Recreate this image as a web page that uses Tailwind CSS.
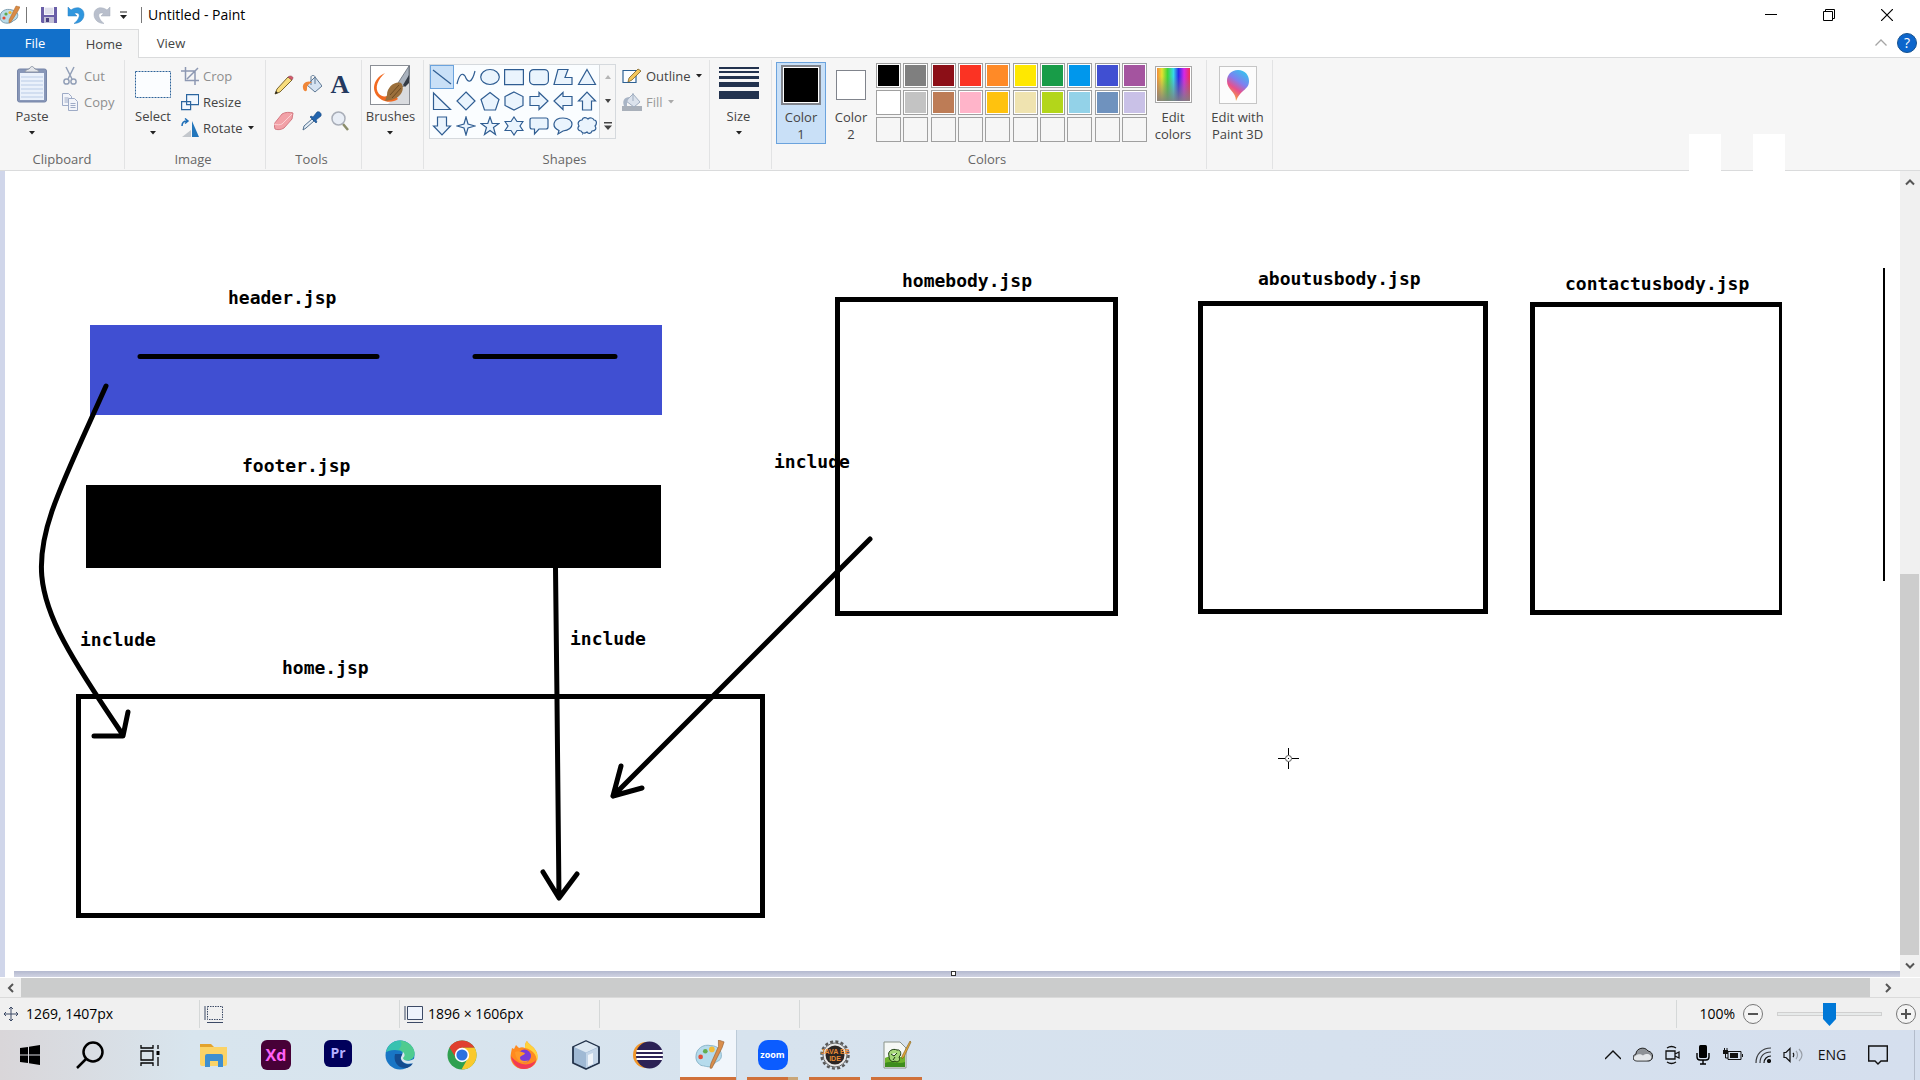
<!DOCTYPE html>
<html lang="en">
<head>
<meta charset="utf-8">
<title>Untitled - Paint</title>
<script src="https://cdn.jsdelivr.net/npm/@tailwindcss/browser@4"></script>
</head>
<body class="flex h-screen w-full flex-col overflow-hidden bg-white font-['Open_Sans',sans-serif] text-[13px] leading-5 text-[#444]">

<!-- Title bar -->
<header class="flex h-[29px] shrink-0 items-center">
  <svg class="h-5 w-5" viewBox="0 0 20 20"><path d="M0 12C0 6 6 3 12 5c5 1 7 4 5 8-1 2-3 2-4 3-2 3-13 4-13-4z" fill="#b9dbe8" stroke="#7d9eb0"/><circle cx="4" cy="13" r="1.600" fill="#e24b35"/><circle cx="6" cy="9" r="1.600" fill="#5fa84c"/><circle cx="10" cy="7.500" r="1.600" fill="#f1b52b"/><path d="M16 1l4 1-2 4-7 11-2 1 0-3z" fill="#d98a45" stroke="#a86426" stroke-width=".5"/></svg>
  <span class="ml-1.5 h-4 w-px bg-[#777]"></span>
  <button class="ml-3.5 h-4 w-4" aria-label="Save"><svg viewBox="0 0 16 16"><path d="M0 0h16v16H1l-1-1z" fill="#6a5fa8"/><path d="M3 0h10v8H3z" fill="#f4f4fa"/><path d="M4 2h8M4 4h8M4 6h8" stroke="#c9c9dd"/><path d="M3 10h10v6H3z" fill="#c2c0d6"/><path d="M5 11h3v4H5z" fill="#4a4180"/></svg></button>
  <button class="ml-2.5 h-[18px] w-[18px]" aria-label="Undo"><svg viewBox="0 0 18 18"><path d="M1 1v9h9L7.500 7.500C11 6 13 8 12 11c-1 3-3 5-5 6.500 6 0 10-4 10-9C17 2 10-.5 4 4z" fill="#2f96de" stroke="#2a7fc0" stroke-width=".5"/></svg></button>
  <button class="ml-2 h-[18px] w-[18px]" aria-label="Redo"><svg viewBox="0 0 18 18"><path d="M17 1v9H8l2.500-2.500C7 6 5 8 6 11c1 3 3 5 5 6.500-6 0-10-4-10-9C1 2 8-.5 14 4z" fill="#b9bfcc" stroke="#a5acba" stroke-width=".5"/></svg></button>
  <button class="ml-2 h-2.5 w-2.5" aria-label="Customize toolbar"><svg viewBox="0 0 10 10"><path d="M1 2h7" stroke="#222"/><path d="M1 5h7L4.500 9z" fill="#222"/></svg></button>
  <span class="ml-3 h-4 w-px bg-[#777]"></span>
  <h1 class="ml-1.5 text-[14px] text-black">Untitled - Paint</h1>
  <div class="mr-1 ml-auto flex">
    <button class="grid h-7 w-[58px] place-items-center" aria-label="Minimize"><svg class="h-3 w-3" viewBox="0 0 12 12"><path d="M0 5.500h12" stroke="#000"/></svg></button>
    <button class="grid h-7 w-[58px] place-items-center" aria-label="Restore"><svg class="h-3 w-3" viewBox="0 0 12 12" fill="none" stroke="#000"><path d="M.5 2.500h9v9h-9zM2.500 2.500v-2h9v9h-2"/></svg></button>
    <button class="grid h-7 w-[58px] place-items-center" aria-label="Close"><svg class="h-3 w-3" viewBox="0 0 12 12"><path d="M0 0l12 12M12 0L0 12" stroke="#000" stroke-width="1.200"/></svg></button>
  </div>
</header>

<!-- Ribbon tabs -->
<nav class="flex h-[29px] shrink-0 border-b border-[#dadbdc]">
  <button class="h-7 w-[70px] bg-[#1270ca] text-white">File</button>
  <button class="h-[29px] w-[69px] border-t border-r border-[#dadbdc] bg-[#f6f6f6]">Home</button>
  <button class="h-7 w-16">View</button>
  <div class="mr-[3px] ml-auto flex items-center gap-2.5">
    <button aria-label="Collapse ribbon"><svg class="h-2 w-3" viewBox="0 0 12 8"><path d="M.5 6.500L6 1l5.500 5.500" fill="none" stroke="#a5a5a5" stroke-width="1.300"/></svg></button>
    <button class="h-5 w-5 rounded-full border border-[#17528f] bg-[#0d66cc] text-center text-[14px] leading-4 text-white" aria-label="Help">?</button>
  </div>
</nav>

<!-- Ribbon -->
<section class="relative flex h-[113px] shrink-0 border-b border-[#dadbdc] bg-[#f6f6f6] pt-0.5 pb-px">
  <!-- Clipboard -->
  <div class="flex w-[125px] flex-col border-r border-[#e2e3e4]">
    <div class="flex flex-1 pt-1.5">
      <button class="ml-2 flex w-12 flex-col items-center">
        <svg class="h-10 w-8" viewBox="0 0 32 40"><rect x="1.500" y="3" width="29" height="33" rx="2" fill="#8897b8" stroke="#7685a8"/><path d="M4 7h24v27H4z" fill="#eaf1fb"/><path d="M5 11h22M5 15h22M5 19h22M5 23h22M5 27h22M5 31h22" stroke="#b9cbe6"/><path d="M9 6c0-3 4-2 5-4 1-2 3-2 4 0 1 2 5 1 5 4z" fill="#e4e6ea" stroke="#8d96a5"/></svg>
        <span>Paste</span>
        <svg class="mt-1 h-1.5 w-2" viewBox="0 0 8 6"><path d="M1 1h6L4 4.500z" fill="#222"/></svg>
      </button>
      <div class="ml-1.5 flex flex-col text-[#8e8e8e]">
        <button class="flex h-[26px] items-center gap-1.5 pb-1.5"><svg class="h-5 w-4" viewBox="0 0 16 20" fill="none" stroke="#93a0b8" stroke-width="1.500"><path d="M4 1l6 12M12 1L6 13"/><circle cx="4.500" cy="15.500" r="2.600"/><circle cx="11.500" cy="15.500" r="2.600"/></svg>Cut</button>
        <button class="flex h-[26px] items-center gap-1.5 pb-1.5"><svg class="h-5 w-4" viewBox="0 0 16 20" fill="#f3f5fa" stroke="#9eabc6"><path d="M.5 1.500h6l3 3v9h-9z"/><path d="M2.500 6h4M2.500 8h4M2.500 10h4"/><path d="M6.500 6.500h6l3 3v9h-9z"/><path d="M8.500 11.500h5M8.500 13.500h5M8.500 15.500h5"/></svg>Copy</button>
      </div>
    </div>
    <div class="h-5 text-center text-[#666]">Clipboard</div>
  </div>
  <!-- Image -->
  <div class="flex w-[141px] flex-col border-r border-[#e2e3e4]">
    <div class="flex flex-1 pt-1.5">
      <button class="ml-1 flex w-12 flex-col items-center">
        <svg class="h-10 w-9" viewBox="0 0 36 40"><rect x=".5" y="5.500" width="35" height="26" fill="#fbfdff" stroke="#2d6399" stroke-dasharray="2 1"/></svg>
        <span>Select</span>
        <svg class="mt-1 h-1.5 w-2" viewBox="0 0 8 6"><path d="M1 1h6L4 4.500z" fill="#222"/></svg>
      </button>
      <div class="ml-1 flex flex-col">
        <button class="flex h-[26px] items-center gap-1 pb-1.5 text-[#8e8e8e]"><svg class="h-[18px] w-[18px]" viewBox="0 0 18 18" fill="none" stroke="#8d98b2" stroke-width="1.500"><path d="M4.500 0v13.500H18M0 4h14v14M6 12l8-8M14 4l3-3"/></svg>Crop</button>
        <button class="flex h-[26px] items-center gap-1 pb-1.5"><svg class="h-[18px] w-[18px]" viewBox="0 0 18 18" fill="#f1f7fe" stroke="#2b659f" stroke-width="1.200"><path d="M.6 8.600h9v8h-9zM5.600 1.600h12v10h-12z"/></svg>Resize</button>
        <button class="flex h-[26px] items-center gap-1 pb-1.5"><svg class="h-5 w-[18px]" viewBox="0 0 18 20"><path d="M1 19h9v-7z" fill="#c3c7cc"/><path d="M11 3v16h7z" fill="#2376bb"/><path d="M1 8c0-4 2-5 5-5M4 .5L7 3 4 5.500" fill="none" stroke="#1f6fb8" stroke-width="1.500"/></svg>Rotate<svg class="h-1.5 w-2" viewBox="0 0 8 6"><path d="M1 1h6L4 4.500z" fill="#222"/></svg></button>
      </div>
    </div>
    <div class="h-5 pr-1 text-center text-[#666]">Image</div>
  </div>
  <!-- Tools -->
  <div class="flex w-24 flex-col border-r border-[#e2e3e4]">
    <div class="flex-1 pt-[15px] pl-2">
      <div class="grid w-[76px] grid-cols-3 justify-between gap-x-2 gap-y-4">
        <button aria-label="Pencil"><svg class="h-5 w-5" viewBox="0 0 20 20"><path d="M1 19l2-5L14 2l4 3L6 17z" fill="#f8dd7c" stroke="#7b6630"/><path d="M14 2l2-1c2 0 3 1 3 2l-1 2z" fill="#d9586b" stroke="#8d4450" stroke-width=".6"/><path d="M1 19l1-3 2 2z" fill="#222"/></svg></button>
        <button aria-label="Fill with color"><svg class="h-5 w-5" viewBox="0 0 20 20"><path d="M5 10l8-8 7 9-7 6z" fill="#d6e3f1" stroke="#5e7894"/><path d="M9 10V2c0-2 4-2 4 0v7" fill="none" stroke="#5e7894"/><path d="M10 7C4 5 0 9 1 13c0 3 4 5 4 1 0-4 1-4 5-7z" fill="#f08637"/></svg></button>
        <button class="h-5 w-5 font-['Liberation_Serif',serif] text-[26px] leading-5 font-bold text-[#24395f]" aria-label="Text">A</button>
        <button aria-label="Eraser"><svg class="h-5 w-5" viewBox="0 0 20 20"><path d="M0 13L8 3c3-2 8-2 11-1l-1 6-8 9c-3 2-7 2-9 1z" fill="#f2a1a7" stroke="#d47982"/><path d="M0 13c3 1 6 1 8 0L18 3" fill="none" stroke="#fbd0d3"/></svg></button>
        <button aria-label="Color picker"><svg class="h-5 w-5" viewBox="0 0 20 20"><path d="M1 19l1-4 8-7 2 2-8 7z" fill="#e4edf6" stroke="#52708e"/><path d="M8 6l1-1 2 1 4-5c2-1 5 1 4 4l-5 4 1 2-1 1z" fill="#2264ad" stroke="#16477e" stroke-width=".6"/></svg></button>
        <button aria-label="Magnifier"><svg class="h-5 w-5" viewBox="0 0 20 20"><path d="M13 13l5 6" stroke="#8a8c6a" stroke-width="2.500"/><circle cx="8.500" cy="7.500" r="6.500" fill="#e9eef6" stroke="#a9aeb8" stroke-width="1.500"/></svg></button>
      </div>
    </div>
    <div class="h-5 pr-1 text-center text-[#666]">Tools</div>
  </div>
  <!-- Brushes -->
  <div class="flex w-[62px] flex-col items-center border-r border-[#e2e3e4] pt-[5px] pr-1">
    <button class="flex flex-col items-center">
      <svg class="h-10 w-10" viewBox="0 0 40 40"><rect x=".5" y=".5" width="39" height="39" fill="#fff" stroke="#8b8f96"/><path d="M39 16v23H18z" fill="#d9dbdf"/><path d="M15 8C2 14 0 28 12 35c6 3 12 2 16-1l-6-7c-4 5-9 6-13 2-5-6-1-15 6-21z" fill="#f26a22"/><path d="M39 1L28 18l5 4 6-8z" fill="#a9b2be" stroke="#555d68" stroke-width=".7"/><path d="M39 10l-6 10 2 2 4-4z" fill="#333b46"/><path d="M17 30c0-8 8-14 14-12 3 3 2 9-1 12-5 5-9 5-15 6z" fill="#9b6f3b"/><path d="M20 30l9-10M22 33l9-10" stroke="#6d4a22"/></svg>
      <span class="mt-px">Brushes</span>
      <svg class="mt-1 h-1.5 w-2" viewBox="0 0 8 6"><path d="M1 1h6L4 4.500z" fill="#222"/></svg>
    </button>
  </div>
  <!-- Shapes -->
  <div class="flex w-[286px] flex-col border-r border-[#e2e3e4]">
    <div class="flex flex-1 pt-1 pl-[5px]">
      <div class="flex h-[75px] border border-[#d5d9dd] bg-[#fafdff]">
        <div class="grid w-[169px] grid-cols-7 grid-rows-3">
          <button class="grid place-items-center border border-[#6ba3dd] bg-[#c9e0f7]" aria-label="Line"><svg class="h-5 w-5" viewBox="0 0 20 20"><path d="M1 3l18 14" stroke="#2f5d92" stroke-width="1.200"/></svg></button>
          <button class="grid place-items-center" aria-label="Curve"><svg class="h-5 w-5" viewBox="0 0 20 20"><path d="M1 17C3 8 6 5 9 9c3 8 7 7 10-5" fill="none" stroke="#2f5d92" stroke-width="1.200"/></svg></button>
          <button class="grid place-items-center" aria-label="Oval"><svg class="h-5 w-5" viewBox="0 0 20 20" fill="#eaf4fd" stroke="#2f5d92" stroke-width="1.200"><ellipse cx="10" cy="10" rx="9.300" ry="7.500"/></svg></button>
          <button class="grid place-items-center" aria-label="Rectangle"><svg class="h-5 w-5" viewBox="0 0 20 20" fill="#eaf4fd" stroke="#2f5d92" stroke-width="1.200"><path d="M.6 2.600h18.800v15H.6z"/></svg></button>
          <button class="grid place-items-center" aria-label="Rounded rectangle"><svg class="h-5 w-5" viewBox="0 0 20 20" fill="#eaf4fd" stroke="#2f5d92" stroke-width="1.200"><rect x=".6" y="2.600" width="18.800" height="15" rx="4"/></svg></button>
          <button class="grid place-items-center" aria-label="Polygon"><svg class="h-5 w-5" viewBox="0 0 20 20" fill="#eaf4fd" stroke="#2f5d92" stroke-width="1.200"><path d="M5 2.500h10l-3 8h7v7H1z"/></svg></button>
          <button class="grid place-items-center" aria-label="Triangle"><svg class="h-5 w-5" viewBox="0 0 20 20" fill="#eaf4fd" stroke="#2f5d92" stroke-width="1.200"><path d="M10 2.500l8.500 15h-17z"/></svg></button>
          <button class="grid place-items-center" aria-label="Right triangle"><svg class="h-5 w-5" viewBox="0 0 20 20" fill="#eaf4fd" stroke="#2f5d92" stroke-width="1.200"><path d="M1.500 2v16.500h17z"/></svg></button>
          <button class="grid place-items-center" aria-label="Diamond"><svg class="h-5 w-5" viewBox="0 0 20 20" fill="#eaf4fd" stroke="#2f5d92" stroke-width="1.200"><path d="M10 1l9 9-9 9-9-9z"/></svg></button>
          <button class="grid place-items-center" aria-label="Pentagon"><svg class="h-5 w-5" viewBox="0 0 20 20" fill="#eaf4fd" stroke="#2f5d92" stroke-width="1.200"><path d="M10 1.500l9 7-3.500 10.500h-11L1 8.500z"/></svg></button>
          <button class="grid place-items-center" aria-label="Hexagon"><svg class="h-5 w-5" viewBox="0 0 20 20" fill="#eaf4fd" stroke="#2f5d92" stroke-width="1.200"><path d="M10 1l9 4.500v9L10 19l-9-4.500v-9z"/></svg></button>
          <button class="grid place-items-center" aria-label="Right arrow"><svg class="h-5 w-5" viewBox="0 0 20 20" fill="#eaf4fd" stroke="#2f5d92" stroke-width="1.200"><path d="M1 5.500h9V1.500l9 8.500-9 8.500v-4H1z"/></svg></button>
          <button class="grid place-items-center" aria-label="Left arrow"><svg class="h-5 w-5" viewBox="0 0 20 20" fill="#eaf4fd" stroke="#2f5d92" stroke-width="1.200"><path d="M19 5.500h-9V1.500L1 10l9 8.500v-4h9z"/></svg></button>
          <button class="grid place-items-center" aria-label="Up arrow"><svg class="h-5 w-5" viewBox="0 0 20 20" fill="#eaf4fd" stroke="#2f5d92" stroke-width="1.200"><path d="M5.500 19v-9H1.500L10 1l8.500 9h-4v9z"/></svg></button>
          <button class="grid place-items-center" aria-label="Down arrow"><svg class="h-5 w-5" viewBox="0 0 20 20" fill="#eaf4fd" stroke="#2f5d92" stroke-width="1.200"><path d="M5.500 1v9H1.500L10 19l8.500-9h-4V1z"/></svg></button>
          <button class="grid place-items-center" aria-label="Four-point star"><svg class="h-5 w-5" viewBox="0 0 20 20" fill="#eaf4fd" stroke="#2f5d92" stroke-width="1.200"><path d="M10 1l2 7 7 2-7 2-2 7-2-7-7-2 7-2z"/></svg></button>
          <button class="grid place-items-center" aria-label="Five-point star"><svg class="h-5 w-5" viewBox="0 0 20 20" fill="#eaf4fd" stroke="#2f5d92" stroke-width="1.200"><path d="M10 1l2.200 6.500H19l-5.500 4L15.500 18.500 10 14.500l-5.500 4 2-7L1 7.500h6.800z"/></svg></button>
          <button class="grid place-items-center" aria-label="Six-point star"><svg class="h-5 w-5" viewBox="0 0 20 20" fill="#eaf4fd" stroke="#2f5d92" stroke-width="1.200"><path d="M10 1l3 4.500h6L16 10l3 4.500h-6L10 19l-3-4.500H1L4 10 1 5.500h6z"/></svg></button>
          <button class="grid place-items-center" aria-label="Rounded rectangular callout"><svg class="h-5 w-5" viewBox="0 0 20 20" fill="#eaf4fd" stroke="#2f5d92" stroke-width="1.200"><path d="M3 2h14q2 0 2 2v7q0 2-2 2H10l-4.500 5V13H3q-2 0-2-2V4q0-2 2-2z"/></svg></button>
          <button class="grid place-items-center" aria-label="Oval callout"><svg class="h-5 w-5" viewBox="0 0 20 20" fill="#eaf4fd" stroke="#2f5d92" stroke-width="1.200"><path d="M5 18l1-3.500C-2 11 0 2 10 2c12 0 12 12 0 13z"/></svg></button>
          <button class="grid place-items-center" aria-label="Cloud callout"><svg class="h-5 w-5" viewBox="0 0 20 20" fill="#eaf4fd" stroke="#2f5d92" stroke-width="1.200"><path d="M4 15c-3 0-4-3-2-5-2-3 0-6 3-6 1-3 4-3 6-1 2-2 5-1 6 1 3 0 3 4 1 6 2 3 0 5-3 5-1 3-4 3-5 1-3 2-5 1-6-1zM5 18h1"/></svg></button>
        </div>
        <div class="flex w-4 flex-col border-l border-[#d5d9dd] bg-[#f6f6f6]">
          <button class="grid flex-1 place-items-center" aria-label="Scroll shapes up"><svg class="h-1.5 w-2" viewBox="0 0 8 6"><path d="M1 5h6L4 1z" fill="#b5b5b5"/></svg></button>
          <button class="grid flex-1 place-items-center" aria-label="Scroll shapes down"><svg class="h-1.5 w-2" viewBox="0 0 8 6"><path d="M1 1h6L4 5z" fill="#444"/></svg></button>
          <button class="grid flex-1 place-items-center" aria-label="More shapes"><svg class="h-2.5 w-2" viewBox="0 0 8 10"><path d="M0 1h8v1.500H0zM0 4.500h8L4 9z" fill="#444"/></svg></button>
        </div>
      </div>
      <div class="ml-1.5 flex flex-col pt-px">
        <button class="flex h-[26px] items-center gap-1 pb-1"><svg class="h-[18px] w-5" viewBox="0 0 20 18"><path d="M1 3.500h13v12H1z" fill="#fbfdff" stroke="#2d6193" stroke-width="1.200"/><path d="M6 15l1-4 9-9 3 2-9 9z" fill="#f4c75c" stroke="#7c5f24" stroke-width=".8"/></svg>Outline<svg class="h-1.5 w-2" viewBox="0 0 8 6"><path d="M1 1h6L4 4.500z" fill="#222"/></svg></button>
        <button class="flex h-[26px] items-center gap-1 pb-1 text-[#9a9a9a]"><svg class="h-5 w-5" viewBox="0 0 20 20"><path d="M0 14h20v5H0z" fill="#a9b0ba"/><path d="M4 9l7-7 7 8-6 5z" fill="#dbe2ec" stroke="#9fadc0"/><path d="M11 1v8" stroke="#9fadc0"/><path d="M8 5C2 5 0 9 2 14h3c0-4 0-5 3-9z" fill="#a8b4c5"/></svg>Fill<svg class="h-1.5 w-2" viewBox="0 0 8 6"><path d="M1 1h6L4 4.500z" fill="#aaa"/></svg></button>
      </div>
    </div>
    <div class="h-5 pr-1 text-center text-[#666]">Shapes</div>
  </div>
  <!-- Size -->
  <div class="flex w-[62px] flex-col items-center border-r border-[#e2e3e4] pt-1.5 pr-1">
    <button class="flex flex-col items-center">
      <svg class="h-10 w-10" viewBox="0 0 40 40" fill="#22324e"><path d="M0 1h40v2H0zM0 5h40v2H0zM0 10h40v3H0zM0 16h40v5H0zM0 25h40v8H0z"/></svg>
      <span>Size</span>
      <svg class="mt-1 h-1.5 w-2" viewBox="0 0 8 6"><path d="M1 1h6L4 4.500z" fill="#222"/></svg>
    </button>
  </div>
  <!-- Colors -->
  <div class="flex w-[435px] flex-col border-r border-[#e2e3e4]">
    <div class="flex flex-1 items-start pt-0.5 pl-1">
      <button class="flex h-[82px] w-[50px] flex-col items-center border border-[#6ba3dd] bg-[#c9e0f7] pt-0.5 leading-[17px]">
        <span class="h-10 w-10 shrink-0 border-2 border-[#80848c] bg-white p-px"><span class="block h-full w-full bg-black"></span></span>
        <span class="mt-1">Color<br>1</span>
      </button>
      <button class="flex h-[82px] w-[50px] flex-col items-center pt-2 leading-[17px]">
        <span class="h-[30px] w-[30px] shrink-0 border border-[#80848c] bg-white"></span>
        <span class="mt-[9px]">Color<br>2</span>
      </button>
      <div id="palette" class="mt-px grid w-[271px] grid-cols-[repeat(10,25px)] justify-between gap-y-0.5"></div>
      <button class="ml-1 flex w-11 flex-col items-center pt-1 leading-[17px]">
        <span class="h-[37px] w-[37px] border border-[#a9a9a9] bg-white p-px"><span class="block h-full w-full bg-[linear-gradient(to_top,rgba(128,128,128,0.9),rgba(128,128,128,0)_75%),linear-gradient(to_right,#f08a3c,#e8e030_15%,#3fd43a_32%,#38d8e8_50%,#2a2ae8_65%,#d628e8_82%,#f03050)]"></span></span>
        <span class="mt-1.5">Edit<br>colors</span>
      </button>
    </div>
    <div class="h-5 pr-1 text-center text-[#666]">Colors</div>
  </div>
  <!-- Paint 3D -->
  <div class="flex w-[66px] flex-col items-center border-r border-[#e2e3e4] pt-1.5 pr-1">
    <button class="flex flex-col items-center leading-[17px] whitespace-nowrap">
      <svg class="h-[38px] w-[38px]" viewBox="0 0 38 38"><defs><linearGradient id="p3d" x1=".8" y1="0" x2=".3" y2="1"><stop offset="0" stop-color="#2fc8ee"/><stop offset=".4" stop-color="#7f7ff0"/><stop offset=".65" stop-color="#e8508c"/><stop offset="1" stop-color="#f7b52e"/></linearGradient></defs><rect x=".5" y=".5" width="37" height="37" fill="#fcfcfc" stroke="#c6c6c6"/><path d="M19 4c7 0 11 5 11 11 0 9-8 8-13 20 0-10-9-11-9-20C8 9 12 4 19 4z" fill="url(#p3d)"/></svg>
      <span class="mt-[5px]">Edit with<br>Paint 3D</span>
    </button>
  </div>
  <span class="absolute right-[199px] -bottom-px h-[37px] w-8 bg-white"></span>
  <span class="absolute right-[135px] -bottom-px h-[37px] w-8 bg-white"></span>
</section>

<!-- Work area -->
<main class="flex min-h-0 flex-1">
  <div class="relative flex-1 overflow-hidden border-l-[5px] border-[#d0d6ea] bg-white">
    <svg class="absolute top-0 -left-[5px] h-[800px] w-[1900px]" viewBox="0 171 1900 800" fill="none" stroke="#000" stroke-width="5" stroke-linecap="round" stroke-linejoin="round">
      <rect x="90" y="325" width="572" height="90" fill="#404fd2" stroke="none"/>
      <path d="M140 356.500H377M475 356.500H615"/>
      <path d="M86 485h575v83H86z" fill="#000" stroke="none"/>
      <path d="M106 386C24 569 10 569 123 735M128 712l-5 24H94"/>
      <path d="M555.500 568L557 700l2 198M543 872l16 26 18-24"/>
      <path d="M870 539L613 796M621 766l-8 30 29-8"/>
      <g stroke-linejoin="miter">
        <path d="M78.500 696.500h684v219h-684zM837.500 299.500h278v314h-278zM1200.500 303.500h285v308h-285z"/>
        <path d="M1780.500 304.500h-248v308h248" stroke-linecap="butt"/>
        <path d="M1780.500 302v313" stroke-width="3" stroke-linecap="butt"/>
        <path d="M1884 268v313" stroke-width="2" stroke-linecap="butt"/>
      </g>
      <g stroke-width="1" stroke-linecap="butt">
        <path d="M1278 758.500h7M1292 758.500h7M1288.500 748v7M1288.500 762v7"/>
        <circle cx="1288.500" cy="758.500" r="3" stroke="#555"/>
        <path d="M1288 758.500h1"/>
      </g>
      <g class="font-['DejaVu_Sans_Mono',monospace] text-[18px] font-bold" fill="#000" stroke="none">
        <text x="228" y="304">header.jsp</text>
        <text x="242" y="472">footer.jsp</text>
        <text x="80" y="646">include</text>
        <text x="570" y="645">include</text>
        <text x="282" y="674">home.jsp</text>
        <text x="774" y="468">include</text>
        <text x="902" y="287">homebody.jsp</text>
        <text x="1258" y="285">aboutusbody.jsp</text>
        <text x="1565" y="290">contactusbody.jsp</text>
      </g>
    </svg>
    <div class="absolute right-0 bottom-0 left-[9px] h-1.5 bg-linear-to-b from-[#b4b9cf] to-[#d0d3e2]"></div>
    <span class="absolute bottom-px left-[calc(50%-2px)] h-[5px] w-[5px] border border-[#333] bg-white"></span>
  </div>
  <div class="flex w-5 flex-col bg-[#f0f0f0]">
    <button class="grid h-[22px] place-items-center" aria-label="Scroll up"><svg class="h-2 w-2.5" viewBox="0 0 10 8"><path d="M1 6.500l4-4 4 4" fill="none" stroke="#555" stroke-width="2"/></svg></button>
    <div class="flex-1"></div>
    <div class="mr-px flex-1 bg-[#cdcdcd]"></div>
    <button class="grid h-[22px] place-items-center" aria-label="Scroll down"><svg class="h-2 w-2.5" viewBox="0 0 10 8"><path d="M1 1.500l4 4 4-4" fill="none" stroke="#555" stroke-width="2"/></svg></button>
  </div>
</main>

<!-- Horizontal scroll bar -->
<div class="flex h-[21px] shrink-0 border-t border-b border-t-white border-b-[#dadada] bg-[#f0f0f0]">
  <button class="grid w-[21px] place-items-center" aria-label="Scroll left"><svg class="h-2.5 w-2" viewBox="0 0 8 10"><path d="M6 1L2 5l4 4" fill="none" stroke="#555" stroke-width="2"/></svg></button>
  <div class="flex-1 bg-[#cbcccc]"></div>
  <button class="mr-3.5 grid w-9 place-items-center" aria-label="Scroll right"><svg class="h-2.5 w-2" viewBox="0 0 8 10"><path d="M2 1l4 4-4 4" fill="none" stroke="#555" stroke-width="2"/></svg></button>
</div>

<!-- Status bar -->
<footer class="flex h-8 shrink-0 items-center bg-[#f0f0f0] text-[14px] text-black">
  <div class="flex h-7 w-[200px] items-center gap-[7px] border-r border-[#d5d8d8] pl-[3px]"><svg class="h-4 w-4" viewBox="0 0 16 16" fill="none" stroke="#3c4a66"><path d="M8 1v14M1 8h14M6 3l2-2 2 2M6 13l2 2 2-2M3 6L1 8l2 2M13 6l2 2-2 2"/></svg>1269, 1407px</div>
  <div class="flex h-7 w-[200px] items-center border-r border-[#d5d8d8] pl-1"><svg class="h-5 w-5" viewBox="0 0 20 20" fill="none" stroke="#3c4a66"><path d="M3.500 2.500h15v13h-15z" stroke-dasharray="1.500 1"/><path d="M1 2v14M3 18.500h16"/></svg></div>
  <div class="flex h-7 w-[200px] items-center gap-1 border-r border-[#d5d8d8] pl-1"><svg class="h-5 w-5" viewBox="0 0 20 20" fill="#eef3fc" stroke="#3c4a66"><path d="M3.500 2.500h15v13h-15z"/><path d="M1 2v14M3 18.500h16"/></svg>1896 × 1606px</div>
  <div class="h-7 w-[200px] border-r border-[#d5d8d8]"></div>
  <div class="h-7 flex-1 border-r border-[#d5d8d8]"></div>
  <label for="zoom" class="ml-[22px]">100%</label>
  <button class="ml-2 grid h-5 w-5 place-items-center rounded-full border border-[#777] bg-[#f4f4f4]" aria-label="Zoom out"><svg class="h-3 w-3" viewBox="0 0 12 12"><path d="M1 6h10" stroke="#555" stroke-width="2"/></svg></button>
  <input id="zoom" type="range" value="50" class="mx-3.5 h-6 w-[105px] appearance-none bg-transparent [&::-webkit-slider-runnable-track]:h-1 [&::-webkit-slider-runnable-track]:border [&::-webkit-slider-runnable-track]:border-[#d0d0d0] [&::-webkit-slider-runnable-track]:bg-[#e7eaea] [&::-webkit-slider-thumb]:-mt-[10px] [&::-webkit-slider-thumb]:h-[23px] [&::-webkit-slider-thumb]:w-[13px] [&::-webkit-slider-thumb]:appearance-none [&::-webkit-slider-thumb]:bg-[#0078d7] [&::-webkit-slider-thumb]:[clip-path:polygon(0_0,100%_0,100%_70%,50%_100%,0_70%)]">
  <button class="mr-1 grid h-5 w-5 place-items-center rounded-full border border-[#777] bg-[#f4f4f4]" aria-label="Zoom in"><svg class="h-3 w-3" viewBox="0 0 12 12"><path d="M1 6h10M6 1v10" stroke="#555" stroke-width="2"/></svg></button>
</footer>

<!-- Taskbar -->
<div class="flex h-[50px] shrink-0 bg-linear-to-r from-[#d9d6d9] via-[#d8e5ee] via-10% to-[#d5dfee]">
  <button class="grid w-[60px] place-items-center" aria-label="Start"><svg class="h-5 w-5" viewBox="0 0 20 20"><path d="M0 3l8-1v7.500H0zM9 1.800L20 0v9.500H9zM0 10.500h8V18l-8-1zM9 10.500h11V20L9 18.200z" fill="#000"/></svg></button>
  <button class="grid w-[60px] place-items-center" aria-label="Search"><svg class="h-7 w-7" viewBox="0 0 28 28" fill="none" stroke="#000" stroke-width="2.500"><circle cx="17" cy="11" r="9.500"/><path d="M10 18l-9 9"/></svg></button>
  <button class="mr-[3px] grid w-[60px] place-items-center" aria-label="Task view"><svg class="h-6 w-5" viewBox="0 0 20 24" fill="none" stroke="#000" stroke-width="1.300"><path d="M1 2v3h12V2M1 8h12v9H1zM1 23v-3h12v3M18 2v4M18 14v9"/><path d="M18 8v4" stroke-width="3"/></svg></button>
  <button class="grid w-[62px] place-items-center" aria-label="File Explorer"><svg class="h-7 w-7" viewBox="0 0 28 28"><path d="M0 3h11l3 3v3H0z" fill="#e3a32d"/><path d="M0 6h27v17q0 2-2 2H2q-2 0-2-2z" fill="#fbd366"/><path d="M5 15q0-2 2-2h14q2 0 2 2v11h-5v-6h-8v6H5z" fill="#3e8fd0"/></svg></button>
  <button class="grid w-[62px] place-items-center" aria-label="Adobe XD"><span class="grid h-[30px] w-[30px] place-items-center rounded-md bg-[#470137] text-[16px] font-bold text-[#ff61f6]">Xd</span></button>
  <button class="grid w-[62px] place-items-center" aria-label="Premiere Pro"><span class="mb-1 grid h-[27px] w-[28px] place-items-center rounded-md bg-[#00005b] text-[14px] font-bold text-[#b5b0ff]">Pr</span></button>
  <button class="grid w-[62px] place-items-center" aria-label="Edge"><svg class="h-[30px] w-[30px]" viewBox="0 0 30 30"><circle cx="15" cy="15" r="14.500" fill="#1976c5"/><path d="M1 12C3 4 9 0 16 .5c8 .5 13 7 13.500 12 .4 5-3 8-8 8-3 0-5-1-4-3 2-2 1-6-3-7C8 9 3 11 1 12z" fill="#37c2b0"/><path d="M15 .5c8 .5 14 6 14.500 12 .4 5-3 8-8 8-3 0-5-1-4-3 2-3 1-7-4-8 3-3 4-6 1.500-9z" fill="#5fd07a" opacity=".6"/><path d="M10 14c-2 8 3 15 12 14 3-1 5-3 6-5-5 3-10 1-11-3-1-1-1-2 0-3l1-3z" fill="#134c90"/><path d="M18 12c3 3 1 5 0 6 0 3 8 4 12 0v4l-2 1c-5 2-11 0-12-4-.5-2 1-3 2-7z" fill="#d8e5ee"/></svg></button>
  <button class="grid w-[62px] place-items-center" aria-label="Chrome"><svg class="h-[30px] w-[30px]" viewBox="0 0 30 30"><circle cx="15" cy="15" r="14.500" fill="#2fa04f"/><path d="M2.500 7.500A14.500 14.500 0 0 1 27.600 7.800H15L9 18z" fill="#e0402f"/><path d="M15 7.800h12.600A14.500 14.500 0 0 1 14.500 29.500L21 18z" fill="#fac92c"/><circle cx="15" cy="15" r="7.200" fill="#fff"/><circle cx="15" cy="15" r="5.600" fill="#2a72e0"/></svg></button>
  <button class="grid w-[62px] place-items-center" aria-label="Firefox"><svg class="h-[30px] w-[30px]" viewBox="0 0 30 30"><path d="M3 8l2 1 2-4 3 3c2-1 4-1 6 0 0-3 0-5 2-7 1 3 8 6 10 12 2 9-4 16-13 16C5 29 0 21 2 13z" fill="#ff8a1f"/><path d="M18 1c1 3 8 6 10 12 1 3 1 6 0 8-1-7-4-11-12-13 0-3 0-5 2-7z" fill="#ffd23c"/><path d="M2 16c1 7 6 13 13 13 6 0 11-4 12-9-4 5-16 8-25-4z" fill="#f23a55"/><circle cx="15.500" cy="16" r="6.500" fill="#7a3bd8"/><path d="M6 12c4-2 7 0 10 1-1 3-5 2-5 5 0 3 5 4 9 2-4 5-13 3-14-8z" fill="#ff9a2a"/></svg></button>
  <button class="grid w-[62px] place-items-center" aria-label="NetBeans"><svg class="h-[30px] w-7" viewBox="0 0 28 30" stroke="#22324a" stroke-width="1.800" stroke-linejoin="round"><path d="M14 1l13 6v16l-13 6L1 23V7z" fill="#9fb9d4"/><path d="M14 1.500l12 5.500-12 5.500L2 7z" fill="#dbe7f2" stroke="none"/><path d="M14 13l12-5.500v15L14 28z" fill="#c3d5e8" stroke="none"/><path d="M16 15l5-2v11l-5 2z" fill="#eef4fa" stroke="none"/></svg></button>
  <button class="grid w-[62px] place-items-center" aria-label="Eclipse"><svg class="h-[30px] w-[30px]" viewBox="0 0 30 30"><circle cx="13" cy="15" r="13" fill="#f0962a"/><circle cx="16.500" cy="15" r="13.500" fill="#2c2255"/><path d="M3.500 11h26M3 15h27M3.500 19h26" stroke="#fff" stroke-width="2"/></svg></button>
  <button class="ml-px flex w-[57px] flex-col items-center border-r border-[#bccbd8] bg-[#f1f6fb] pt-1.5" aria-label="Paint"><svg class="mt-1 ml-1 h-[30px] w-[30px]" viewBox="0 0 32 32"><path d="M1 18C1 9 9 4 17 6c7 0 12 5 11 12-1 5-5 4-7 7-3 4-6 4-10 3-3-1-4 0-6-2-3-2-4-5-4-8z" fill="#b5dbec" stroke="#86b2c8"/><circle cx="6" cy="18" r="2.500" fill="#e2503a"/><circle cx="11" cy="12" r="2.500" fill="#63ad50"/><circle cx="18" cy="10" r="3" fill="#f4bd37"/><path d="M25 0l6 2-2 6-11 22h-2l1-5 8-18z" fill="#d98e4c" stroke="#9c6231" stroke-width=".7"/></svg><span class="mt-auto h-[3px] w-full bg-[#d0713a]"></span></button>
  <button class="ml-2.5 flex w-[51px] flex-col items-center pt-2.5" aria-label="Zoom"><span class="grid h-[30px] w-[30px] place-items-center rounded-[10px] bg-[#0b5cff] text-[9px] leading-3 font-bold text-white">zoom</span><span class="mt-auto h-[3px] w-full border-r-[10px] border-[#c9a678] bg-[#d0713a]"></span></button>
  <button class="ml-[11px] flex w-[51px] flex-col items-center pt-2.5" aria-label="Java EE IDE"><svg class="h-[30px] w-[30px]" viewBox="0 0 30 30"><circle cx="15" cy="15" r="13.500" fill="none" stroke="#5a5a5a" stroke-width="2.500" stroke-dasharray="3 2.300"/><circle cx="15" cy="15" r="12" fill="#e8e8e8" stroke="#666"/><circle cx="15" cy="15" r="9.500" fill="#2b2523"/><g class="font-['Liberation_Sans',sans-serif] text-[7px] font-bold" fill="#e88a35" text-anchor="middle"><text x="15" y="14">JAVA EE</text><text x="15" y="21">IDE</text></g></svg><span class="mt-auto h-[3px] w-full bg-[#d0713a]"></span></button>
  <button class="ml-[11px] flex w-[51px] flex-col items-center pt-2.5" aria-label="Notepad++"><svg class="h-[30px] w-[30px]" viewBox="0 0 30 30"><path d="M2 2h16l6 6v20H2z" fill="#f5f8f5" stroke="#8a938a"/><path d="M3 18c8-4 13 2 20-3v12H3z" fill="#6db52c"/><path d="M3 23c7-3 13 2 20-1v5H3z" fill="#3d8d1d"/><path d="M7 16c-2-5 4-8 8-6 4-1 5 5 2 7 2 4-2 6-4 4-3 2-6-1-6-5zM9 14l3 2 3-3M11 20l2-3" fill="#a5d879" stroke="#1c3a12"/><path d="M28 1l1 1-7 15-2 2v-3z" fill="#e0a63a" stroke="#80601f" stroke-width=".6"/></svg><span class="mt-auto h-[3px] w-full bg-[#d0713a]"></span></button>

  <div class="ml-auto flex items-center text-[#111]">
    <button class="grid h-10 w-[30px] place-items-center" aria-label="Show hidden icons"><svg class="h-4 w-4" viewBox="0 0 16 16"><path d="M0 12l8-8 8 8" fill="none" stroke="#111" stroke-width="1.400"/></svg></button>
    <button class="grid h-10 w-[30px] place-items-center" aria-label="OneDrive"><svg class="h-5 w-5" viewBox="0 0 20 20"><path d="M4 16c-5 0-5-6-1-7 0-6 9-8 12-3 6 1 6 9 1 10z" fill="#8e9297" stroke="#222"/><path d="M4 15.500c-4 0-4-4-1-5 3-2 5-1 7 0 4-3 9-1 8 3-1 2-2 2-14 2z" fill="#e4e7ea"/></svg></button>
    <button class="grid h-10 w-[30px] place-items-center" aria-label="Meet now"><svg class="h-5 w-4" viewBox="0 0 16 20" fill="none" stroke="#111" stroke-width="1.300"><path d="M2 3c3-2 6-2 9 0M2 17c3 2 6 2 9 0M1 6h9v8H1zM10 9l4-2v6l-4-2"/></svg></button>
    <button class="grid h-10 w-[30px] place-items-center" aria-label="Microphone"><svg class="h-5 w-4" viewBox="0 0 16 20"><rect x="4" width="8" height="13" rx="1.500"/><path d="M2 8v4q0 3 3 3h6q3 0 3-3V8M8 15v4M5 19h6" fill="none" stroke="#000" stroke-width="1.400"/></svg></button>
    <button class="grid h-10 w-[30px] place-items-center" aria-label="Battery"><svg class="h-4 w-5" viewBox="0 0 20 16"><path d="M5 4.500h13v8H5z" fill="none" stroke="#111"/><path d="M7 6h8v5H7zM19 7h1v3h-1zM0 3h5v4H0z" fill="#111"/><path d="M1.500 1v2M4 1v2M2.500 7v4H5" fill="none" stroke="#111"/></svg></button>
    <button class="grid h-10 w-[30px] place-items-center" aria-label="Wi-Fi"><svg class="h-4 w-4" viewBox="0 0 16 16" fill="none" stroke="#111" stroke-width="1.200"><path d="M1 16C1 7 7 1 16 1M5 16c0-7 4-11 11-11" opacity=".8"/><path d="M9 16c0-4 3-7 7-7"/><circle cx="14" cy="14" r="1.500" fill="#111"/></svg></button>
    <button class="grid h-10 w-[30px] place-items-center" aria-label="Volume"><svg class="h-4 w-5" viewBox="0 0 20 16" fill="none" stroke="#111" stroke-width="1.200"><path d="M1 5.500h2l4-4v13l-4-4H1z"/><path d="M10 6c1 1 1 3 0 4"/><path d="M13 4c2 2 2 6 0 8M16 2c4 4 4 8 0 12" stroke="#999fa8"/></svg></button>
    <button class="mr-1 h-10 w-12 text-[14px]">ENG</button>
    <button class="mr-[18px] grid h-10 w-9 place-items-center" aria-label="Notifications"><svg class="h-5 w-5" viewBox="0 0 20 20"><path d="M.7 1h18.600v15H13l-3 3-3-3H.7z" fill="none" stroke="#111" stroke-width="1.400"/></svg></button>
    <span class="mr-[5px] h-[50px] w-px bg-[#b3bccb]"></span>
  </div>
</div>

<script>
  const colors = ['#000000','#7f7f7f','#8c0f17','#fb3323','#ff8a27','#ffe800','#189c48','#0097ec','#404fd2','#a4549f',
                  '#ffffff','#c3c3c3','#bd7c56','#ffb4c9','#ffc20e','#efe3b0','#b3d61a','#93d2e8','#6f92be','#c9c1e7'];
  const palette = document.getElementById('palette');
  for (let i = 0; i < 30; i++) {
    const b = document.createElement('button');
    b.className = 'h-[25px] w-[25px] border border-[#a0a0a0] p-px ' + (colors[i] ? 'bg-white' : 'bg-[#f6f6f6]');
    b.setAttribute('aria-label', colors[i] || 'Empty custom color');
    const s = document.createElement('span');
    s.className = 'block h-full w-full';
    if (colors[i]) s.style.backgroundColor = colors[i];
    b.append(s);
    palette.append(b);
  }
</script>
</body>
</html>
